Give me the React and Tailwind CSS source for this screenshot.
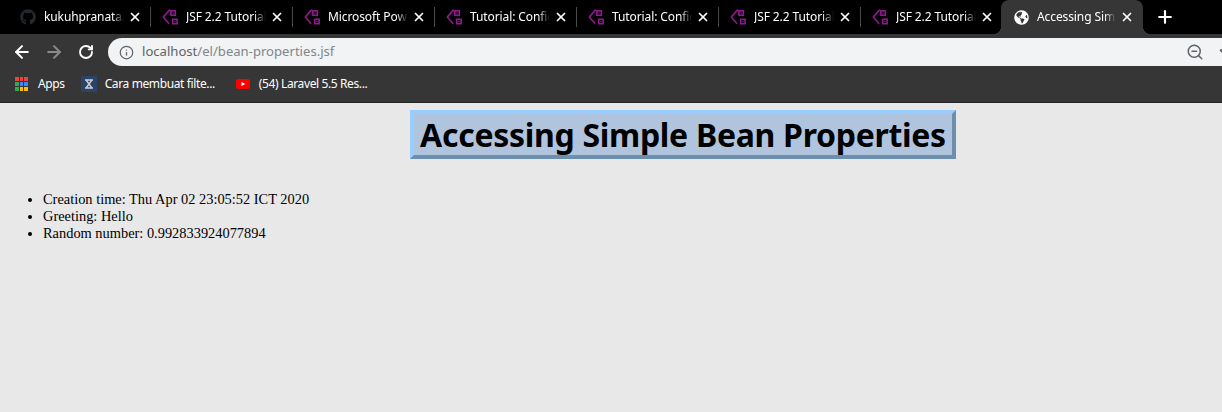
import { ArrowLeft, ArrowRight, RotateCw, Info, ZoomOut, Plus, X, Star } from "lucide-react";
import { FaGithub, FaGlobeAmericas } from "react-icons/fa";

const tabs = [
  { title: "kukuhpranata/", icon: "github" },
  { title: "JSF 2.2 Tutorial", icon: "jsf" },
  { title: "Microsoft Power", icon: "jsf" },
  { title: "Tutorial: Config", icon: "jsf" },
  { title: "Tutorial: Config", icon: "jsf" },
  { title: "JSF 2.2 Tutorial", icon: "jsf" },
  { title: "JSF 2.2 Tutorial", icon: "jsf" },
];

const appColors = [
  "#e8453c", "#e8453c", "#e8453c",
  "#34a853", "#4285f4", "#4285f4",
  "#34a853", "#fbbc05", "#fbbc05",
];

const info = [
  "Creation time: Thu Apr 02 23:05:52 ICT 2020",
  "Greeting: Hello",
  "Random number: 0.992833924077894",
];

function JsfIcon() {
  return (
    <svg width="17" height="17" viewBox="0 0 18 18" fill="none" stroke="#8e1a8e" strokeWidth="1.8">
      <path d="M9.5 1 H8 L1.5 8.5 L8 16" />
      <rect x="10" y="1.5" width="5" height="5" />
      <rect x="12" y="11" width="5" height="5" />
      <rect x="11.8" y="3.3" width="1.4" height="1.4" fill="#8e1a8e" stroke="none" />
      <rect x="13.8" y="12.8" width="1.4" height="1.4" fill="#8e1a8e" stroke="none" />
    </svg>
  );
}

function Tab({ title, icon }) {
  return (
    <div className="relative flex h-[34px] w-[142px] shrink-0 items-center">
      <div className="ml-[11px] flex w-[16px] shrink-0 justify-center">
        {icon === "github" ? <FaGithub size={16} color="#24292e" /> : <JsfIcon />}
      </div>
      <div className="ml-[8px] w-[80px] overflow-hidden whitespace-nowrap text-[12px] tracking-[-0.1px] text-white font-['Noto_Sans',sans-serif] [mask-image:linear-gradient(to_right,black_85%,transparent)]">
        {title}
      </div>
      <X size={14} strokeWidth={3} color="#fff" className="ml-[4px] shrink-0" />
      <div className="absolute right-0 top-[7px] h-[20px] w-px bg-[#4a4a4a]" />
    </div>
  );
}

export default function App() {
  return (
    <div className="flex h-[412px] w-[1222px] flex-col overflow-hidden bg-[#e8e8e8]">
      <div className="flex h-[34px] bg-black pl-[9px]">
        {tabs.map((tab, i) => (
          <Tab key={i} title={tab.title} icon={tab.icon} />
        ))}
        <div className="relative -ml-[2px] flex h-[34px] w-[142px] shrink-0 items-center rounded-t-[8px] bg-[#363636]">
          <div className="absolute -left-[8px] bottom-0 h-[8px] w-[8px] bg-[radial-gradient(circle_at_0_0,transparent_8px,#363636_8px)]" />
          <FaGlobeAmericas size={15} color="#fff" className="ml-[13px] shrink-0" />
          <div className="ml-[8px] w-[79px] overflow-hidden whitespace-nowrap text-[12px] tracking-[-0.1px] text-white font-['Noto_Sans',sans-serif] [mask-image:linear-gradient(to_right,black_85%,transparent)]">
            Accessing Simple
          </div>
          <X size={14} strokeWidth={3} color="#fff" className="ml-[4px] shrink-0" />
          <div className="absolute -right-[8px] bottom-0 h-[8px] w-[8px] bg-[radial-gradient(circle_at_100%_0,transparent_8px,#363636_8px)]" />
        </div>
        <Plus size={20} strokeWidth={2.6} color="#fff" className="ml-[12px] mt-[7px]" />
      </div>

      <div className="flex h-[32px] items-center bg-[#363636] pl-[12px] pt-[4px]">
        <ArrowLeft size={20} strokeWidth={2.4} color="#fff" />
        <ArrowRight size={20} strokeWidth={2.4} color="#8a8a8a" className="ml-[12px]" />
        <RotateCw size={16} strokeWidth={2.8} color="#fff" className="ml-[14px]" />
        <div className="ml-[14px] flex h-[28px] flex-1 items-center rounded-l-[14px] bg-[#f1f3f4] pl-[11px]">
          <Info size={15} strokeWidth={2} color="#5f6368" className="shrink-0" />
          <span className="ml-[8px] flex-1 text-[13.1px] text-[#80868b] font-['Noto_Sans',sans-serif]">
            <span className="text-[#5f6368]">localhost</span>/el/bean-properties.jsf
          </span>
          <ZoomOut size={18} strokeWidth={2} color="#5f6368" className="shrink-0" />
          <Star size={16} strokeWidth={2} color="#5f6368" className="ml-[15px] -mr-[13px] shrink-0" />
        </div>
      </div>

      <div className="flex h-[37px] items-center border-b border-b-[#222] bg-[#363636] pl-[15px] text-[12px] tracking-[-0.38px] text-white font-['Noto_Sans',sans-serif]">
        <div className="grid w-[13px] grid-cols-3 gap-[1px]">
          {appColors.map((c, i) => (
            <div key={i} className="h-[4px] w-[3.5px]" style={{ backgroundColor: c }} />
          ))}
        </div>
        <span className="ml-[10px]">Apps</span>
        <div className="ml-[16px] flex h-[16px] w-[16px] items-center justify-center bg-[#2a4468]">
          <svg width="10" height="10" viewBox="0 0 10 10" fill="none" stroke="#c9ced6" strokeWidth="1.4">
            <path d="M1 1 H9 M1 9 H9 M2.5 1.5 L7.5 8.5 M7.5 1.5 L2.5 8.5" />
          </svg>
        </div>
        <span className="ml-[8px]">Cara membuat filte...</span>
        <svg width="14" height="10" viewBox="0 0 14 10" className="ml-[21px]">
          <rect width="14" height="10" rx="2.5" fill="#ff0000" />
          <path d="M5.5 3 L9.2 5 L5.5 7 Z" fill="#fff" />
        </svg>
        <span className="ml-[9px]">(54) Laravel 5.5 Res...</span>
      </div>

      <div className="font-['Liberation_Serif',serif] text-[14.4px] text-black">
        <h1 className="ml-[410px] mt-[7px] w-[546px] whitespace-nowrap border-4 border-t-[#99ccff] border-l-[#99ccff] border-b-[#6d8fae] border-r-[#6d8fae] bg-[#b0c4de] text-center text-[32px] leading-[41px] tracking-[-0.3px] font-bold font-['Noto_Sans',sans-serif]">
          Accessing Simple Bean Properties
        </h1>
        <ul className="mt-[32px] list-disc pl-[43px] leading-[17px]">
          {info.map((line) => (
            <li key={line}>{line}</li>
          ))}
        </ul>
      </div>
    </div>
  );
}
